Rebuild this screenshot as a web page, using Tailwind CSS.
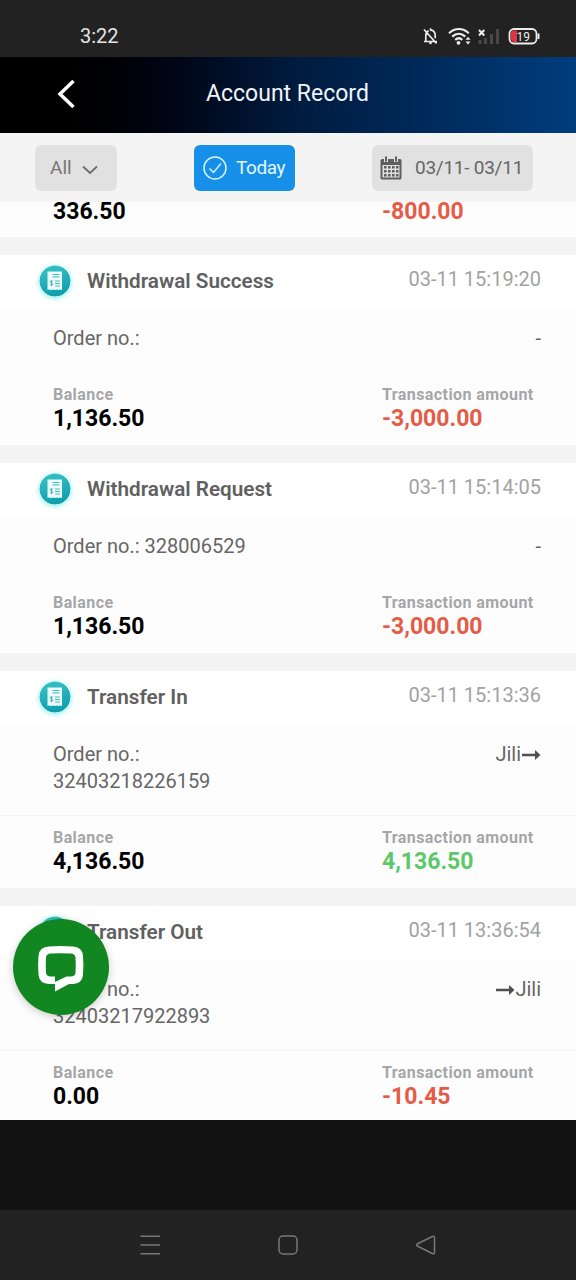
<!DOCTYPE html>
<html lang="en">
<head>
<meta charset="utf-8">
<title>Account Record</title>
<script src="https://cdn.jsdelivr.net/npm/@tailwindcss/browser@4"></script>
</head>
<body class="w-[576px] h-[1280px] overflow-hidden bg-[#111111] font-[Roboto,sans-serif] text-[20px] text-[#666666] whitespace-nowrap">
<svg class="absolute size-0">
  <defs>
    <linearGradient id="teal" x1="0" y1="0" x2="0.3" y2="1"><stop offset="0" stop-color="#3cc3c6"/><stop offset="1" stop-color="#129fae"/></linearGradient>
  </defs>
  <symbol id="receipt" viewBox="0 0 32 32">
    <circle cx="16" cy="16" r="15.5" fill="url(#teal)"/>
    <path d="M8.500 6.500h14.500v18.500l-1.800-.6-1.800.6-1.800-.6-1.900.6-1.800-.6-1.800.6-1.800-.6-1.800.6z" fill="#eafcfc"/>
    <path d="M13.500 9.500h7M13.500 12h7M16 16h5M16 18.500h5M16 21h5" stroke="#4cb9c2" stroke-width="1.2"/>
    <path d="M13.800 16.300c-.8-.7-2.800-.6-2.700.6 0 1.400 2.800.9 2.800 2.300 0 1.300-2.200 1.300-3 .4M12.500 15v6" stroke="#4cb9c2" stroke-width="1" fill="none"/>
  </symbol>
</svg>

<div class="h-[57px] bg-[#222222] flex items-center justify-between pl-[80px] pr-[36px] pt-[14px] text-[#e4e4e4]">
  <span class="text-[20px] leading-[20px]">3:22</span>
  <svg width="118" height="24" viewBox="0 0 118 24" fill="none" stroke="#ececec">
    <path d="M2 17.500h13M3.800 17v-5.500c0-2.300 1-4 2.900-4.700M8 6.200c3-.5 5.200 1.800 5.200 5v3M8.600 4.300v1.500M2 5.500l12.500 14" stroke-width="1.700"/>
    <circle cx="8.500" cy="19" r="1.300" fill="#ececec" stroke="none"/>
    <path d="M27 9.200c6-5.600 13.800-5.600 19.800 0M30.200 12.600c4-3.800 9.200-3.800 13 0M33.200 15.900c2.300-2 5-2 7 0" stroke-width="2.200"/>
    <circle cx="36.500" cy="18.800" r="1.900" fill="#ececec" stroke="none"/>
    <path d="M43.500 15.700l2.500-3 2.500 3zM43.500 17.500l2.500 3 2.500-3z" fill="#ececec" stroke="none"/>
    <path d="M57 6l5.300 5.500M62.300 6l-5.300 5.500" stroke-width="2"/>
    <path d="M58 20v-4M63.500 20v-6M69.500 20v-10M75.500 20v-15" stroke="#484848" stroke-width="3"/>
    <rect x="87.500" y="5" width="27" height="14.500" rx="4.500" stroke-width="1.800"/>
    <path d="M116.500 9.500v5.500" stroke-width="2"/>
    <path d="M92 6.500h3v11.500h-3q-3 0-3-3v-5.500q0-3 3-3z" fill="#e0343f" stroke="none"/>
    <text x="94.500" y="16.500" font-family="Roboto" font-size="12" fill="#ececec" stroke="none">19</text>
  </svg>
</div>

<div class="h-[76px] bg-linear-to-r from-black from-5% via-[#001a3d] via-50% to-[#003d7d] grid grid-cols-[206px_1fr] items-center text-[#f0f5f8]">
  <svg class="ml-[56px] -mt-[5px]" width="22" height="32" viewBox="0 0 22 32" fill="none" stroke="#fff" stroke-width="3.500"><path d="M17.500 4L4 17l13.500 13"/></svg>
  <span class="text-[23px] leading-[30px] pb-[3px]">Account Record</span>
</div>

<div class="h-[69px] bg-[#f4f4f4] flex items-start pt-[12px] pl-[35px]">
  <div class="w-[82px] h-[46px] rounded-md bg-[#e1e1e1] flex items-center pl-[15px] gap-[10px] text-[#777777]">
    <span class="text-[19px] leading-[24px] pb-[1px]">All</span>
    <svg class="mt-[3px]" width="16" height="10" viewBox="0 0 16 10" fill="none" stroke="#6c6c6c" stroke-width="1.800"><path d="M1 1.500l7 6.500 7-6.500"/></svg>
  </div>
  <div class="w-[101px] h-[46px] ml-[77px] rounded-md bg-[#168fe9] flex items-center pl-[9px] gap-[9px] text-[#e4f6ff]">
    <svg width="24" height="24" viewBox="0 0 24 24" fill="none" stroke="#d8f4ff" stroke-width="1.500"><circle cx="12" cy="12" r="11"/><path d="M6.500 12.500l4 4 7.500-9"/></svg>
    <span class="text-[19px] leading-[24px] tracking-[-0.4px] pb-[1px]">Today</span>
  </div>
  <div class="w-[161px] h-[46px] ml-[77px] rounded-md bg-[#e1e1e1] flex items-center pl-[8px] gap-[13px] text-[#666666]">
    <svg width="22" height="24" viewBox="0 0 22 24">
      <path d="M2 3h18q1.500 0 1.500 1.500V22q0 1.500-1.500 1.500H2Q.5 23.500.5 22V4.500Q.5 3 2 3z" fill="#5f5f5f"/>
      <path d="M2.500 9h17v12.500h-17z" fill="#e1e1e1"/>
      <path d="M4 11.300h14.500M4 15.300h14.500M4 19.300h14.500" stroke="#5f5f5f" stroke-width="2.400" stroke-dasharray="2.600 1.400"/>
      <path d="M6 0v6M16 0v6" stroke="#e1e1e1" stroke-width="4"/><path d="M6 .5v5M16 .5v5" stroke="#5f5f5f" stroke-width="2"/>
    </svg>
    <span class="text-[19px] leading-[24px] tracking-[-0.25px] pb-[1px]">03/11- 03/11</span>
  </div>
</div>

<main class="relative h-[918px] overflow-hidden bg-[#f4f4f4] flex flex-col gap-[18px]">
  <section class="h-[35px] shrink-0 bg-[#fdfdfd] grid grid-cols-[329px_1fr] pl-[53px] text-[23px] leading-[19px] font-bold">
    <div class="text-black">336.50</div>
    <div class="text-[#e65b47]">-800.00</div>
  </section>

  <section class="shrink-0 bg-[#fdfdfd]">
    <header class="h-[53px] bg-white flex items-center pl-[39px] pr-[35px]">
      <svg class="size-[32px] -mt-[1px] rounded-full shadow-[0_1px_5px_#7ff0f0]"><use href="#receipt"/></svg>
      <h2 class="ml-[16px] text-[20.700px] font-semibold text-[#606060]">Withdrawal Success</h2>
      <time class="ml-auto pb-[5px] text-[#a2a2a2]">03-11 15:19:20</time>
    </header>
    <div class="h-[65px] pt-[17px] pl-[53px] pr-[35px] flex justify-between leading-[27px]"><p>Order no.:</p><p>-</p></div>
    <div class="h-[72px] pt-[11px] pl-[53px] grid grid-cols-[329px_1fr] font-bold">
      <div><p class="text-[16px] tracking-[0.42px] leading-[22px] text-[#a6a6a6]">Balance</p><p class="text-[23px] leading-[25px] text-black">1,136.50</p></div>
      <div><p class="text-[16px] tracking-[0.42px] leading-[22px] text-[#a6a6a6]">Transaction amount</p><p class="text-[23px] leading-[25px] text-[#e65b47]">-3,000.00</p></div>
    </div>
  </section>

  <section class="shrink-0 bg-[#fdfdfd]">
    <header class="h-[53px] bg-white flex items-center pl-[39px] pr-[35px]">
      <svg class="size-[32px] -mt-[1px] rounded-full shadow-[0_1px_5px_#7ff0f0]"><use href="#receipt"/></svg>
      <h2 class="ml-[16px] text-[20.700px] font-semibold text-[#606060]">Withdrawal Request</h2>
      <time class="ml-auto pb-[5px] text-[#a2a2a2]">03-11 15:14:05</time>
    </header>
    <div class="h-[65px] pt-[17px] pl-[53px] pr-[35px] flex justify-between leading-[27px]"><p>Order no.: 328006529</p><p>-</p></div>
    <div class="h-[72px] pt-[11px] pl-[53px] grid grid-cols-[329px_1fr] font-bold">
      <div><p class="text-[16px] tracking-[0.42px] leading-[22px] text-[#a6a6a6]">Balance</p><p class="text-[23px] leading-[25px] text-black">1,136.50</p></div>
      <div><p class="text-[16px] tracking-[0.42px] leading-[22px] text-[#a6a6a6]">Transaction amount</p><p class="text-[23px] leading-[25px] text-[#e65b47]">-3,000.00</p></div>
    </div>
  </section>

  <section class="shrink-0 bg-[#fdfdfd]">
    <header class="h-[53px] bg-white flex items-center pl-[39px] pr-[35px]">
      <svg class="size-[32px] -mt-[1px] rounded-full shadow-[0_1px_5px_#7ff0f0]"><use href="#receipt"/></svg>
      <h2 class="ml-[16px] text-[20.700px] font-semibold text-[#606060]">Transfer In</h2>
      <time class="ml-auto pb-[5px] text-[#a2a2a2]">03-11 15:13:36</time>
    </header>
    <div class="h-[92px] pt-[17px] pl-[53px] pr-[35px] flex justify-between leading-[27px] border-b border-[#f3f3f3]">
      <p>Order no.:<br>32403218226159</p>
      <p class="flex h-[27px] items-center">Jili<svg class="mt-[1px]" width="20" height="12" viewBox="0 0 20 12"><path d="M1 4.700h13V1L19.500 6 14 11V7.300H1z" fill="#505050"/></svg></p>
    </div>
    <div class="h-[72px] pt-[11px] pl-[53px] grid grid-cols-[329px_1fr] font-bold">
      <div><p class="text-[16px] tracking-[0.42px] leading-[22px] text-[#a6a6a6]">Balance</p><p class="text-[23px] leading-[25px] text-black">4,136.50</p></div>
      <div><p class="text-[16px] tracking-[0.42px] leading-[22px] text-[#a6a6a6]">Transaction amount</p><p class="text-[23px] leading-[25px] text-[#5cc86a]">4,136.50</p></div>
    </div>
  </section>

  <section class="shrink-0 bg-[#fdfdfd]">
    <header class="h-[53px] bg-white flex items-center pl-[39px] pr-[35px]">
      <svg class="size-[32px] -mt-[1px] rounded-full shadow-[0_1px_5px_#7ff0f0]"><use href="#receipt"/></svg>
      <h2 class="ml-[16px] text-[20.700px] font-semibold text-[#606060]">Transfer Out</h2>
      <time class="ml-auto pb-[5px] text-[#a2a2a2]">03-11 13:36:54</time>
    </header>
    <div class="h-[92px] pt-[17px] pl-[53px] pr-[35px] flex justify-between leading-[27px] border-b border-[#f3f3f3]">
      <p>Order no.:<br>32403217922893</p>
      <p class="flex h-[27px] items-center"><svg class="mt-[1px]" width="20" height="12" viewBox="0 0 20 12"><path d="M1 4.700h13V1L19.500 6 14 11V7.300H1z" fill="#505050"/></svg>Jili</p>
    </div>
    <div class="h-[72px] pt-[11px] pl-[53px] grid grid-cols-[329px_1fr] font-bold">
      <div><p class="text-[16px] tracking-[0.42px] leading-[22px] text-[#a6a6a6]">Balance</p><p class="text-[23px] leading-[25px] text-black">0.00</p></div>
      <div><p class="text-[16px] tracking-[0.42px] leading-[22px] text-[#a6a6a6]">Transaction amount</p><p class="text-[23px] leading-[25px] text-[#e65b47]">-10.45</p></div>
    </div>
  </section>

  <button class="absolute left-[13px] top-[717px] size-[96px] rounded-full bg-[#118621] shadow-[0_2px_8px_rgba(0,0,0,0.2)]" aria-label="Chat">
    <svg width="96" height="96" viewBox="0 0 96 96"><path fill-rule="evenodd" fill="#fff" d="M36 27.500Q47.500 26.500 60 27.500Q69 28 70 36.500Q70.800 46 70 56Q69 64.500 60 65H56L42 72.500V65H36Q26.500 64.500 25.500 56Q24.700 46 25.500 36.500Q26.500 28 36 27.500ZM37.500 34.500Q33.500 34.800 33 38.500Q32.500 46 33 54Q33.500 57.300 37.500 57.500H42V63L53.500 57.500H58Q62 57.300 62.500 54Q63 46 62.500 38.500Q62 34.800 58 34.500Q47.500 33.800 37.500 34.500Z"/></svg>
  </button>
</main>

<div class="h-[90px] bg-[#111111]"></div>
<nav class="h-[70px] bg-[#222222] grid grid-cols-[20px_20px_20px] gap-x-[118px] pl-[140px] items-center">
  <svg width="20" height="20" viewBox="0 0 20 20" fill="none" stroke="#777" stroke-width="1.500"><path d="M.500 1.300h19.500M.500 10h19.500M.500 18.700h19.500"/></svg>
  <svg width="20" height="20" viewBox="0 0 20 20" fill="none" stroke="#777" stroke-width="1.500"><rect x="1" y="1" width="18" height="18" rx="4"/></svg>
  <svg width="20" height="20" viewBox="0 0 20 20" fill="none" stroke="#777" stroke-width="1.500"><path d="M1.200 9Q0 10 1.200 11L16.300 18.500Q18.500 19.500 18.500 17V3Q18.500 .500 16.300 1.500Z"/></svg>
</nav>
</body>
</html>
